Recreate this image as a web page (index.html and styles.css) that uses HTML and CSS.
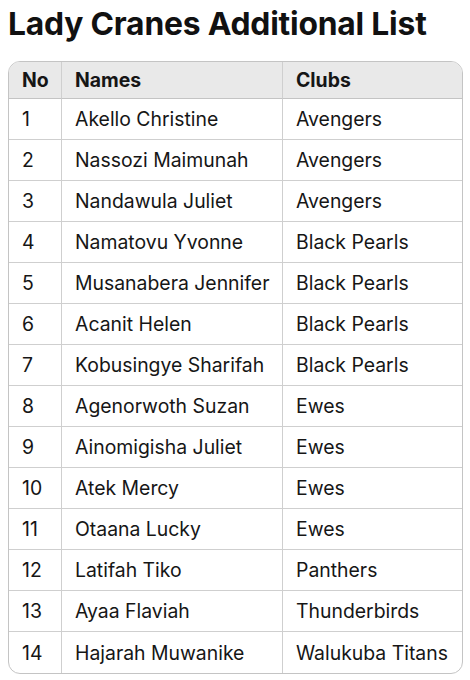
FILE: index.html
```html
<!DOCTYPE html>
<html>
<head>
<meta charset="utf-8">
<link rel="stylesheet" href="styles.css">
</head>
<body>
<h1 class="title">Lady Cranes Additional List</h1>
<table class="list">
<thead>
<tr><th class="c-no">No</th><th class="c-name">Names</th><th class="c-club">Clubs</th></tr>
</thead>
<tbody>
<tr><td>1</td><td>Akello Christine</td><td>Avengers</td></tr>
<tr><td>2</td><td>Nassozi Maimunah</td><td>Avengers</td></tr>
<tr><td>3</td><td>Nandawula Juliet</td><td>Avengers</td></tr>
<tr><td>4</td><td>Namatovu Yvonne</td><td>Black Pearls</td></tr>
<tr><td>5</td><td>Musanabera Jennifer</td><td>Black Pearls</td></tr>
<tr><td>6</td><td>Acanit Helen</td><td>Black Pearls</td></tr>
<tr><td>7</td><td>Kobusingye Sharifah</td><td>Black Pearls</td></tr>
<tr><td>8</td><td>Agenorwoth Suzan</td><td>Ewes</td></tr>
<tr><td>9</td><td>Ainomigisha Juliet</td><td>Ewes</td></tr>
<tr><td>10</td><td>Atek Mercy</td><td>Ewes</td></tr>
<tr><td>11</td><td>Otaana Lucky</td><td>Ewes</td></tr>
<tr><td>12</td><td>Latifah Tiko</td><td>Panthers</td></tr>
<tr><td>13</td><td>Ayaa Flaviah</td><td>Thunderbirds</td></tr>
<tr><td>14</td><td>Hajarah Muwanike</td><td>Walukuba Titans</td></tr>
</tbody>
</table>
</body>
</html>
```
FILE: styles.css
```css
html, body {
  margin: 0;
  padding: 0;
  background: #ffffff;
}
body {
  padding: 0 8px;
  font-family: Inter, "Liberation Sans", sans-serif;
  color: #161616;
}
.title {
  margin: 0;
  padding-top: 4px;
  height: 61px;
  box-sizing: border-box;
  font-size: 31.8px;
  font-weight: 700;
  letter-spacing: -0.2px;
  line-height: 40px;
  color: #111111;
}
.list {
  width: 455px;
  border-collapse: separate;
  border-spacing: 0;
  border: 1px solid #c4c4c4;
  border-radius: 12px;
  overflow: hidden;
  table-layout: fixed;
  font-size: 19.4px;
}
.c-no { width: 53px; }
.c-name { width: 221px; }
th, td {
  text-align: left;
  padding: 0 0 0 13px;
  border-right: 1px solid #cfcfcf;
  border-bottom: 1px solid #cfcfcf;
  white-space: nowrap;
}
th:last-child, td:last-child { border-right: none; }
tbody tr:last-child td { border-bottom: none; }
th {
  background: #e9e9e9;
  font-weight: 700;
  box-sizing: border-box;
  height: 37px;
  border-bottom-color: #c4c4c4;
}
td {
  height: 41px;
  box-sizing: border-box;
  font-weight: 400;
}
```
